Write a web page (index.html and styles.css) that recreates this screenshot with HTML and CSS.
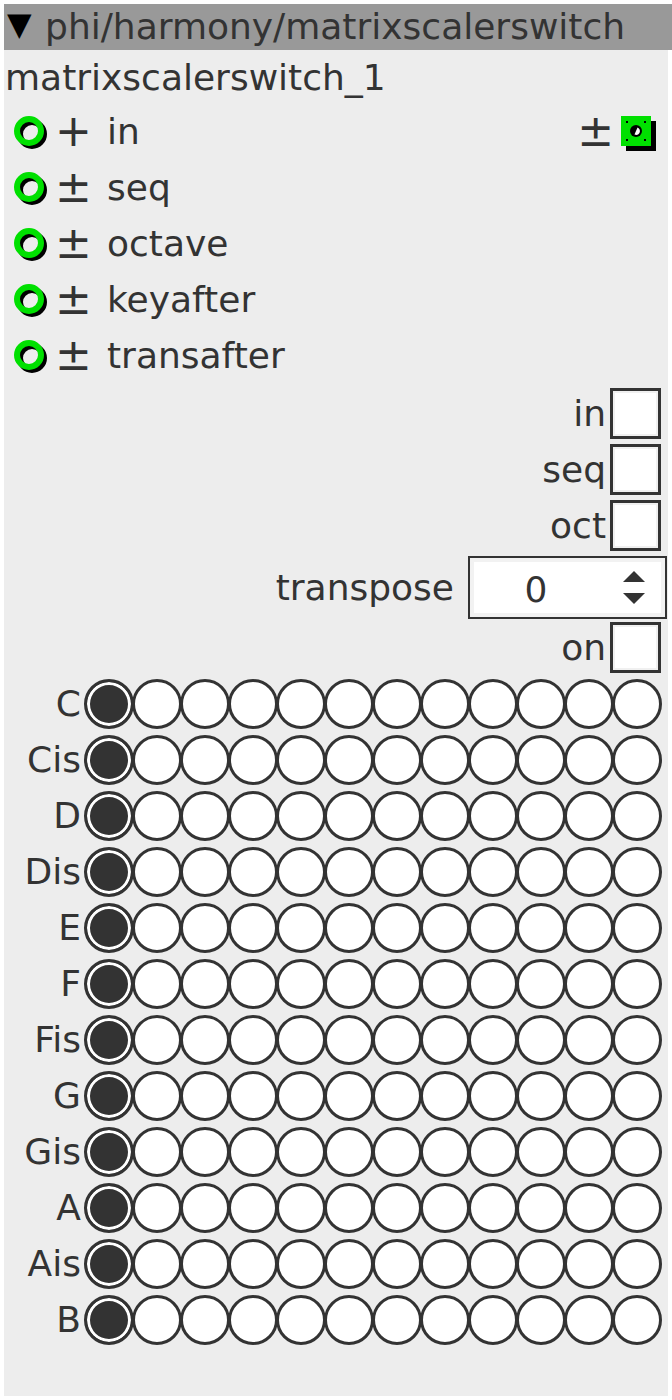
FILE: index.html
```html
<!DOCTYPE html>
<html>
<head>
<meta charset="utf-8">
<link rel="stylesheet" href="styles.css">
</head>
<body>
<div class="panel">
  <div class="titlebar"><span class="tri">▼</span> phi/harmony/matrixscalerswitch</div>
  <div class="name">matrixscalerswitch_1</div>
  <div class="ports">
    <div class="port">
      <svg class="jack" width="38" height="38" viewBox="0 0 38 38"><circle cx="19" cy="20" r="12" fill="none" stroke="#000" stroke-width="6"/><circle cx="16" cy="17" r="12" fill="none" stroke="#00e000" stroke-width="6"/></svg>
      <span class="sign">+</span><span class="pname">in</span>
      <span class="fill"></span>
      <span class="sign out">±</span>
      <svg class="outjack" width="36" height="36" viewBox="0 0 36 36"><rect x="5" y="5" width="30" height="30" fill="#000"/><rect x="0" y="0" width="30" height="30" fill="#00e000"/><circle cx="15" cy="15" r="6" fill="#000"/><path d="M16.5 11.5 A4 4 0 0 1 18.5 17 A4 4 0 0 1 13.5 18.5 Z" fill="#fff"/><rect x="5" y="5" width="2" height="2" fill="#000"/><rect x="23" y="5" width="2" height="2" fill="#000"/><rect x="5" y="23" width="2" height="2" fill="#000"/><rect x="23" y="23" width="2" height="2" fill="#000"/></svg>
    </div>
    <div class="port">
      <svg class="jack" width="38" height="38" viewBox="0 0 38 38"><circle cx="19" cy="20" r="12" fill="none" stroke="#000" stroke-width="6"/><circle cx="16" cy="17" r="12" fill="none" stroke="#00e000" stroke-width="6"/></svg>
      <span class="sign">±</span><span class="pname">seq</span>
    </div>
    <div class="port">
      <svg class="jack" width="38" height="38" viewBox="0 0 38 38"><circle cx="19" cy="20" r="12" fill="none" stroke="#000" stroke-width="6"/><circle cx="16" cy="17" r="12" fill="none" stroke="#00e000" stroke-width="6"/></svg>
      <span class="sign">±</span><span class="pname">octave</span>
    </div>
    <div class="port">
      <svg class="jack" width="38" height="38" viewBox="0 0 38 38"><circle cx="19" cy="20" r="12" fill="none" stroke="#000" stroke-width="6"/><circle cx="16" cy="17" r="12" fill="none" stroke="#00e000" stroke-width="6"/></svg>
      <span class="sign">±</span><span class="pname">keyafter</span>
    </div>
    <div class="port">
      <svg class="jack" width="38" height="38" viewBox="0 0 38 38"><circle cx="19" cy="20" r="12" fill="none" stroke="#000" stroke-width="6"/><circle cx="16" cy="17" r="12" fill="none" stroke="#00e000" stroke-width="6"/></svg>
      <span class="sign">±</span><span class="pname">transafter</span>
    </div>
  </div>

  <div class="controls">
    <div class="crow"><span class="clabel">in</span><span class="check"></span></div>
    <div class="crow"><span class="clabel">seq</span><span class="check"></span></div>
    <div class="crow"><span class="clabel">oct</span><span class="check"></span></div>
    <div class="crow spinrow"><span class="clabel">transpose</span>
      <div class="spin"><span class="spinval">0</span>
        <svg class="arrows" width="26" height="40" viewBox="0 0 26 40"><path d="M2 14 L13 3 L24 14 Z" fill="#333"/><path d="M2 25 L13 36 L24 25 Z" fill="#333"/></svg>
      </div>
    </div>
    <div class="crow"><span class="clabel">on</span><span class="check"></span></div>
  </div>

  <div class="matrix" id="matrix"></div>
</div>
<script>
(function(){
  var notes=["C","Cis","D","Dis","E","F","Fis","G","Gis","A","Ais","B"];
  var m=document.getElementById("matrix");
  var html="";
  notes.forEach(function(n){
    html+='<div class="mrow"><span class="mlabel">'+n+'</span>';
    for(var i=0;i<12;i++){
      html+='<span class="radio'+(i===0?' on':'')+'"></span>';
    }
    html+='</div>';
  });
  m.innerHTML=html;
})();
</script>
</body>
</html>
```

FILE: styles.css
```css
html, body {
  margin: 0;
  padding: 0;
  background: #ffffff;
}
body {
  font-family: "DejaVu Sans", sans-serif;
  color: #333333;
}
.panel {
  margin: 4px 4px 4px 4px;
  width: 664px;
  height: 1392px;
  background: #ededed;
  display: flex;
  flex-direction: column;
}
.titlebar {
  height: 46px;
  background: #999999;
  font-size: 36px;
  line-height: 46px;
  padding-left: 3px;
  width: 668px;
  box-sizing: border-box;
  white-space: nowrap;
  color: #333;
}
.tri {
  color: #000;
  font-size: 32px;
  position: relative;
  top: -4px;
  margin-right: 2px;
}
.name {
  height: 53px;
  font-size: 36px;
  line-height: 56px;
  padding-left: 1px;
  white-space: nowrap;
}
.ports {
  display: flex;
  flex-direction: column;
}
.port {
  height: 56px;
  display: flex;
  align-items: center;
  font-size: 36px;
  padding-left: 9px;
  padding-right: 11px;
}
.jack {
  flex: none;
  margin-top: 4px;
}
.sign {
  width: 44px;
  margin-left: 4px;
  font-size: 44px;
  line-height: 44px;
  flex: none;
}
.sign.out {
  width: auto;
  margin: 0 7px 0 0;
}
.pname {
  margin-left: 8px;
}
.fill {
  flex: 1;
}
.outjack {
  flex: none;
  margin-top: 6px;
}
.controls {
  margin-top: 2px;
  display: flex;
  flex-direction: column;
  align-items: flex-end;
}
.crow {
  height: 56px;
  display: flex;
  align-items: center;
  font-size: 36px;
  padding-right: 7px;
}
.clabel {
  margin-right: 4px;
}
.check {
  width: 51px;
  height: 51px;
  box-sizing: border-box;
  border: 3px solid #333;
  background: #fff;
  box-shadow: inset 0 0 0 2px #f0f0f0;
}
.spinrow {
  height: 66px;
  padding-right: 1px;
  align-items: flex-end;
}
.spinrow .clabel {
  margin-right: 14px;
  align-self: center;
  margin-top: 2px;
}
.spin {
  width: 199px;
  height: 63px;
  box-sizing: border-box;
  border: 2px solid #333;
  background: #fff;
  box-shadow: inset 0 0 0 4px #f2f2f2;
  display: flex;
  align-items: center;
}
.spinval {
  width: 132px;
  text-align: center;
  font-size: 36px;
  padding-top: 4px;
}
.arrows {
  margin-left: 19px;
}
.matrix {
  margin-top: 4px;
  display: flex;
  flex-direction: column;
}
.mrow {
  height: 56px;
  display: flex;
  align-items: flex-start;
}
.mlabel {
  width: 80px;
  box-sizing: border-box;
  padding-right: 3px;
  text-align: right;
  font-size: 36px;
  line-height: 50px;
  flex: none;
}
.radio {
  width: 50px;
  height: 50px;
  box-sizing: border-box;
  border: 3px solid #333;
  border-radius: 50%;
  background: #fff;
  margin-right: -2px;
  flex: none;
}
.radio.on {
  background: #333;
  box-shadow: inset 0 0 0 3px #fff;
}
```
